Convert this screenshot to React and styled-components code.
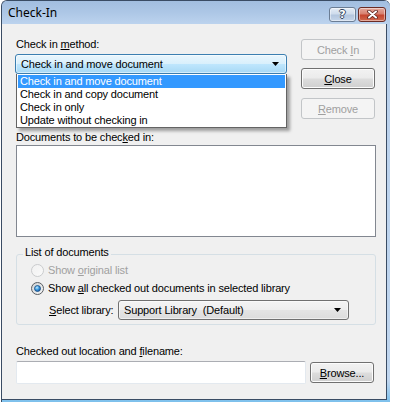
import React from 'react';
import styled, { createGlobalStyle } from 'styled-components';

const GlobalStyle = createGlobalStyle`
  html, body {
    margin: 0;
    padding: 0;
    background: #ffffff;
  }

  body {
    font-family: "Liberation Sans", Arial, sans-serif;
    font-size: 11px;
    letter-spacing: -0.15px;
    color: #000;
  }

  u {
    text-decoration: underline;
    text-underline-offset: 1px;
  }
`;

const Frame = styled.div`
  box-sizing: border-box;
  width: 389px;
  height: 402px;
  margin-left: 1px;
  padding: 0 3px 2px 0;
  display: flex;
  flex-direction: column;
  border-top: 1px solid #3a4c64;
  border-left: 1px solid #3a4c64;
  border-radius: 6px 6px 0 0;
  background: linear-gradient(180deg, #a3bfe1 0px, #b9d0eb 24px, #c0d6ef 380px, #7cc0ec 100%);
`;

const TitleBar = styled.div`
  height: 23px;
  display: flex;
  align-items: flex-start;
  padding: 0 1px 0 6px;
  background: linear-gradient(180deg, #a2bee0 0%, #adc7e6 50%, #bcd3ee 100%);
  border-top-left-radius: 5px;
`;

const Title = styled.span`
  font-family: "Noto Sans", "Open Sans", sans-serif;
  font-size: 12px;
  letter-spacing: 0;
  line-height: 23px;
  color: #000;
`;

const CaptionButtons = styled.div`
  margin-left: auto;
  margin-top: 6px;
  display: flex;
  gap: 2px;
`;

const CaptionButton = styled.div`
  box-sizing: border-box;
  width: ${p => (p.$close ? 28 : 27)}px;
  height: 15px;
  display: flex;
  align-items: center;
  justify-content: center;
  border: 1px solid ${p => (p.$close ? '#6b2b24' : '#6b7d94')};
  border-radius: 3px;
  background: ${p =>
    p.$close
      ? 'linear-gradient(180deg, #e3a99d 0%, #d88170 45%, #c5452f 55%, #cf6a4f 100%)'
      : 'linear-gradient(180deg, #e4ecf6 0%, #cfdcec 45%, #b3c6de 55%, #c6d6ea 100%)'};
  box-shadow: inset 0 0 0 1px rgba(255, 255, 255, 0.45);
`;

const HelpGlyph = styled.span`
  font-family: "DejaVu Sans", sans-serif;
  font-weight: bold;
  font-size: 11px;
  line-height: 11px;
  color: #fff;
  letter-spacing: 0;
  text-shadow: 1px 0 0 #34465e, -1px 0 0 #34465e, 0 1px 0 #34465e, 0 -1px 0 #34465e;
`;

const Client = styled.div`
  flex: 1;
  box-sizing: border-box;
  display: flex;
  flex-direction: column;
  padding: 14px 0 0 14px;
  background: #f0f0f0;
  border-right: 1px solid #3a4c64;
  border-bottom: 1px solid #3a4c64;
`;

const Top = styled.div`
  display: flex;
  gap: 14px;
`;

const MethodColumn = styled.div`
  width: 271px;
  display: flex;
  flex-direction: column;
`;

const Label = styled.div`
  line-height: 13px;
  height: 13px;
  white-space: nowrap;
  color: ${p => (p.$disabled ? '#a0a0a0' : '#000')};
`;

const ComboWrap = styled.div`
  position: relative;
  margin: 3px 0 0 -1px;
`;

const Combo = styled.div`
  box-sizing: border-box;
  width: ${p => p.$width}px;
  height: 20px;
  display: flex;
  align-items: center;
  padding: 0 7px 0 5px;
  border: 1px solid ${p => (p.$active ? '#3c7fb1' : '#707070')};
  border-radius: 3px;
  line-height: 18px;
  white-space: pre;
  background: ${p =>
    p.$active
      ? 'linear-gradient(180deg, #eaf6fd 0%, #d9f0fc 48%, #bee6fd 52%, #a7d9f5 100%)'
      : 'linear-gradient(180deg, #f4f4f4 0%, #eeeeee 48%, #e4e4e4 52%, #dcdcdc 100%)'};
  box-shadow: inset 0 0 0 1px rgba(255, 255, 255, 0.5);
`;

const ComboText = styled.span`
  flex: 1;
`;

const Arrow = () => (
  <svg width="7" height="4" viewBox="0 0 7 4">
    <polygon points="0,0 7,0 3.5,4" fill="#000" />
  </svg>
);

const DropList = styled.div`
  position: absolute;
  top: 20px;
  left: 1px;
  right: 0;
  box-sizing: border-box;
  padding: 1px 1px 0;
  background: #fff;
  border: 1px solid #646464;
  border-top: none;
  box-shadow: 3px 3px 3px rgba(0, 0, 0, 0.35);
  z-index: 5;
`;

const Option = styled.div`
  height: 13px;
  line-height: 13px;
  padding-left: 2px;
  white-space: nowrap;
  background: ${p => (p.$selected ? '#3399ff' : 'transparent')};
  color: ${p => (p.$selected ? '#fff' : '#000')};
`;

const ButtonColumn = styled.div`
  padding-top: 1px;
  display: flex;
  flex-direction: column;
  gap: 8px;
`;

const Button = styled.div`
  box-sizing: border-box;
  width: ${p => p.$width || 74}px;
  height: 21px;
  margin-top: ${p => p.$offset || 0}px;
  display: flex;
  align-items: center;
  justify-content: center;
  border-radius: 3px;
  white-space: pre;
  border: 1px solid ${p => (p.$disabled ? '#c2c5c8' : '#707070')};
  color: ${p => (p.$disabled ? '#a0a0a0' : '#000')};
  background: ${p =>
    p.$disabled
      ? '#f4f4f4'
      : 'linear-gradient(180deg, #f2f2f2 0%, #ebebeb 48%, #dddddd 52%, #cfcfcf 100%)'};
  box-shadow: inset 0 0 0 1px ${p => (p.$disabled ? '#f4f4f4' : '#fcfcfc')};
`;

const SectionLabel = styled(Label)`
  margin-top: ${p => p.$gap}px;
`;

const ListBox = styled.div`
  box-sizing: border-box;
  width: 360px;
  height: 92px;
  margin-top: 1px;
  background: #fff;
  border: 1px solid #828790;
`;

const Group = styled.fieldset`
  box-sizing: border-box;
  width: 360px;
  margin: 9px 0 0;
  padding: 0 0 4px 6px;
  border: 1px solid #d5dfe5;
  border-radius: 3px;
  min-inline-size: 0;
`;

const Legend = styled.legend`
  padding: 0 2px 4px;
  line-height: 13px;
`;

const RadioRow = styled.div`
  height: 14px;
  display: flex;
  align-items: center;
  gap: 4px;
  padding-left: 8px;
  margin-top: ${p => p.$gap || 0}px;
  color: ${p => (p.$disabled ? '#a0a0a0' : '#000')};
  white-space: nowrap;
`;

const Radio = ({ checked, disabled }) => (
  <svg width="13" height="13" viewBox="0 0 13 13">
    <defs>
      <linearGradient id={`rg-${checked ? 'c' : 'd'}`} x1="0" y1="0" x2="1" y2="1">
        <stop offset="0" stopColor={disabled ? '#f0f0f0' : '#cfd2d4'} />
        <stop offset="1" stopColor={disabled ? '#fafafa' : '#f7f7f7'} />
      </linearGradient>
      <radialGradient id="dot" cx="0.4" cy="0.35" r="0.7">
        <stop offset="0" stopColor="#c2eafc" />
        <stop offset="0.5" stopColor="#3c9be0" />
        <stop offset="1" stopColor="#0d4f9c" />
      </radialGradient>
    </defs>
    <circle
      cx="6.5"
      cy="6.5"
      r="6"
      fill={`url(#rg-${checked ? 'c' : 'd'})`}
      stroke={disabled ? '#c9cbcd' : '#5a5e63'}
    />
    {checked && <circle cx="6.5" cy="6.5" r="3" fill="url(#dot)" stroke="#1b4f85" strokeWidth="0.8" />}
  </svg>
);

const LibraryRow = styled.div`
  display: flex;
  align-items: center;
  margin-top: 5px;
  padding-left: 26px;
`;

const LibraryLabel = styled.span`
  width: 69px;
  white-space: nowrap;
`;

const FileRow = styled.div`
  display: flex;
  align-items: flex-start;
  gap: 4px;
  margin-top: 3px;
`;

const TextInput = styled.div`
  box-sizing: border-box;
  width: 290px;
  height: 23px;
  background: #fff;
  border: 1px solid #e3e9ef;
  border-top-color: #abadb3;
  border-radius: 2px;
`;

const CloseGlyph = () => (
  <svg width="11" height="9" viewBox="0 0 11 9">
    <path d="M2 1.5 L9 7.5 M9 1.5 L2 7.5" stroke="#5a231d" strokeWidth="3.6" strokeLinecap="round" />
    <path d="M2 1.5 L9 7.5 M9 1.5 L2 7.5" stroke="#fff" strokeWidth="2" strokeLinecap="round" />
  </svg>
);

const methods = [
  'Check in and move document',
  'Check in and copy document',
  'Check in only',
  'Update without checking in',
];

const App = () => (
  <>
    <GlobalStyle />
    <Frame>
      <TitleBar>
        <Title>Check-In</Title>
        <CaptionButtons>
          <CaptionButton>
            <HelpGlyph>?</HelpGlyph>
          </CaptionButton>
          <CaptionButton $close>
            <CloseGlyph />
          </CaptionButton>
        </CaptionButtons>
      </TitleBar>
      <Client>
        <Top>
          <MethodColumn>
            <Label>Check in <u>m</u>ethod:</Label>
            <ComboWrap>
              <Combo $active $width={272}>
                <ComboText>{methods[0]}</ComboText>
                <Arrow />
              </Combo>
              <DropList>
                {methods.map((m, i) => (
                  <Option key={m} $selected={i === 0}>{m}</Option>
                ))}
              </DropList>
            </ComboWrap>
          </MethodColumn>
          <ButtonColumn>
            <Button $disabled><span>Check <u>I</u>n</span></Button>
            <Button><span><u>C</u>lose</span></Button>
            <Button $disabled $offset={1}><span><u>R</u>emove</span></Button>
          </ButtonColumn>
        </Top>
        <SectionLabel $gap={12}>Documents to be chec<u>k</u>ed in:</SectionLabel>
        <ListBox />
        <Group>
          <Legend>List of documents</Legend>
          <RadioRow $disabled>
            <Radio disabled />
            <span>Show <u>o</u>riginal list</span>
          </RadioRow>
          <RadioRow $gap={4}>
            <Radio checked />
            <span>Show <u>a</u>ll checked out documents in selected library</span>
          </RadioRow>
          <LibraryRow>
            <LibraryLabel><u>S</u>elect library:</LibraryLabel>
            <Combo $width={231}>
              <ComboText>Support Library  (Default)</ComboText>
              <Arrow />
            </Combo>
          </LibraryRow>
        </Group>
        <SectionLabel $gap={20}>Checked out location and <u>f</u>ilename:</SectionLabel>
        <FileRow>
          <TextInput />
          <Button $width={64} $offset={1}><span><u>B</u>rowse...</span></Button>
        </FileRow>
      </Client>
    </Frame>
  </>
);

export default App;
